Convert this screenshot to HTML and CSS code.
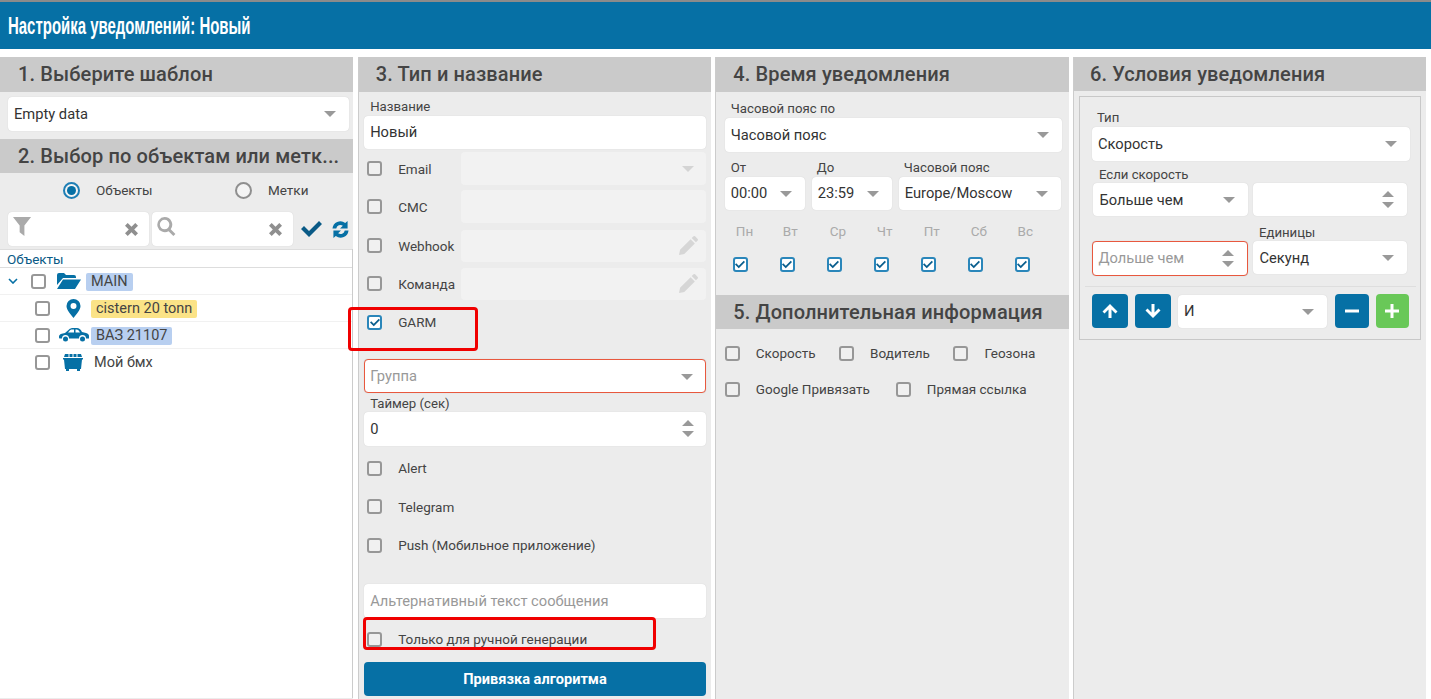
FILE: index.html
```html
<!DOCTYPE html>
<html lang="ru">
<head>
<meta charset="utf-8">
<title>Настройка уведомлений</title>
<link rel="stylesheet" href="styles.css">
</head>
<body>
<svg class="defs" width="0" height="0" aria-hidden="true">
  <defs>
    <symbol id="caret" viewBox="0 0 12 6"><path d="M0 0h12L6 6z"/></symbol>
    <symbol id="spin" viewBox="0 0 12 18"><path d="M6 0l6 6H0zM0 11h12l-6 6z"/></symbol>
    <symbol id="pencil" viewBox="0 0 18 18"><path d="M0 18l1-5L11 3l4 4L5 17zM12 2l1.500-1.500a1.400 1.400 0 0 1 2 0l2 2a1.400 1.400 0 0 1 0 2L16 6z"/></symbol>
    <symbol id="x" viewBox="0 0 12 12"><path d="M2.500 0L6 3.500 9.500 0 12 2.500 8.500 6 12 9.500 9.500 12 6 8.500 2.500 12 0 9.500 3.500 6 0 2.500z"/></symbol>
    <symbol id="tick" viewBox="0 0 12 10"><path d="M1.500 3.500L4.500 6.500 10.500.5 12 2 4.500 9.500 0 5z"/></symbol>
  </defs>
</svg>

<header class="title-bar"><h1 class="title">Настройка уведомлений: Новый</h1></header>

<main class="columns">
  <section class="col">
    <h2 class="head">1. Выберите шаблон</h2>
    <div class="tpl-wrap">
      <div class="field select">Empty data<svg class="caret"><use href="#caret"/></svg></div>
    </div>
    <h2 class="head head-2">2. Выбор по объектам или метк...</h2>
    <div class="radios">
      <label class="radio"><span class="dot on"></span>Объекты</label>
      <label class="radio"><span class="dot"></span>Метки</label>
    </div>
    <div class="filters">
      <div class="field filter">
        <svg class="f-ico" viewBox="0 0 20 20"><path d="M0 0h19L12 9v11l-5-4V9z"/></svg>
        <svg class="clear"><use href="#x"/></svg>
      </div>
      <div class="field filter">
        <svg class="f-ico" viewBox="0 0 20 20"><path fill-rule="evenodd" d="M8 0a8 8 0 0 1 6.400 12.800l5 5-2.200 2.200-5-5A8 8 0 1 1 8 0zm0 3a5 5 0 1 0 0 10A5 5 0 0 0 8 3z"/></svg>
        <svg class="clear"><use href="#x"/></svg>
      </div>
      <svg class="tool-check" viewBox="0 0 21 16"><path d="M0 8l3-3 5 5L18 0l3 3L8 16z"/></svg>
      <svg class="tool-sync" viewBox="0 0 18 18"><path d="M.5 8A8.500 8.500 0 0 1 14 2L16.500 0v8h-8L11.500 5A4.500 4.500 0 0 0 4.500 8zM17.500 10A8.500 8.500 0 0 1 4 16L1.500 18v-8h8L6.500 13A4.500 4.500 0 0 0 13.500 10z"/></svg>
    </div>
    <div class="tree">
      <div class="tree-title">Объекты</div>
      <div class="tree-row">
        <svg class="chev" viewBox="0 0 10 6"><path d="M1 1l4 4 4-4" fill="none" stroke="#0670a5" stroke-width="1.600"/></svg>
        <span class="check root-check"></span>
        <svg class="t-ico folder" viewBox="0 0 24 16"><path d="M0 2a2 2 0 0 1 2-2h5l2 2h8a2 2 0 0 1 2 2v1H6L0 12zM6 6.500h18L18 16H0z"/></svg>
        <span class="tag blue">MAIN</span>
      </div>
      <div class="tree-row sub">
        <span class="check"></span>
        <svg class="t-ico pin" viewBox="0 0 14 19"><path fill-rule="evenodd" d="M7 0a7 7 0 0 1 7 7c0 4-4 8-7 12-3-4-7-8-7-12a7 7 0 0 1 7-7zm0 4a3 3 0 1 0 0 6 3 3 0 0 0 0-6z"/></svg>
        <span class="tag yellow">cistern 20 tonn</span>
      </div>
      <div class="tree-row sub">
        <span class="check"></span>
        <svg class="t-ico car" viewBox="0 0 30 14"><path fill-rule="evenodd" d="M0 8.500c0-2 3-3.200 6-3.500L10 1.500C11 .5 12.500 0 14 0h4c2 0 3.500 1 5 4l4 1c2 .5 3 1.500 3 3v2.500h-3a3.500 3.500 0 0 0-7 0H10a3.500 3.500 0 0 0-7 0H1c-.7 0-1-.5-1-1zM9 4.500h6V1.500h-2c-1 0-1.500.3-2 .8zM16.500 1.500v3H21c-1-2-2-3-3.500-3z"/><circle cx="6.500" cy="11" r="2.500"/><circle cx="23.500" cy="11" r="2.500"/></svg>
        <span class="tag blue">ВАЗ 21107</span>
      </div>
      <div class="tree-row sub last">
        <span class="check"></span>
        <svg class="t-ico bin" viewBox="0 0 20 17"><path d="M1 3l1-3h16l1 3zM0 4h20v1.500h-1l-1 9.500h-1v2h-3v-2H6v2H3v-2H2L1 5.500H0z"/><path d="M6 0v3M10 0v3M14 0v3" stroke="#fff" stroke-width="1"/></svg>
        <span class="plain">Мой бмх</span>
      </div>
    </div>
  </section>

  <section class="col">
    <h2 class="head">3. Тип и название</h2>
    <div class="body-3">
      <label class="lbl name-lbl">Название</label>
      <div class="field name-field">Новый</div>
      <div class="opt opt-first"><span class="check"></span><span class="opt-text">Email</span><div class="field off"><svg class="caret light"><use href="#caret"/></svg></div></div>
      <div class="opt opt-gap5"><span class="check"></span><span class="opt-text">СМС</span><div class="field off"></div></div>
      <div class="opt opt-gap6"><span class="check"></span><span class="opt-text">Webhook</span><div class="field off short"><svg class="pen"><use href="#pencil"/></svg></div></div>
      <div class="opt opt-gap5"><span class="check"></span><span class="opt-text">Команда</span><div class="field off short"><svg class="pen"><use href="#pencil"/></svg></div></div>
      <div class="opt-line garm"><span class="check on"><svg class="tick"><use href="#tick"/></svg></span><span class="opt-text">GARM</span></div>
      <div class="field select bad muted">Группа<svg class="caret"><use href="#caret"/></svg></div>
      <label class="lbl timer-lbl">Таймер (сек)</label>
      <div class="field select">0<svg class="spin"><use href="#spin"/></svg></div>
      <div class="opt-line alert"><span class="check"></span><span class="opt-text">Alert</span></div>
      <div class="opt-line tg"><span class="check"></span><span class="opt-text">Telegram</span></div>
      <div class="opt-line tg"><span class="check"></span><span class="opt-text">Push (Мобильное приложение)</span></div>
      <div class="field muted alt">Альтернативный текст сообщения</div>
      <div class="opt-line manual"><span class="check"></span><span class="opt-text">Только для ручной генерации</span></div>
      <button class="bind" type="button">Привязка алгоритма</button>
    </div>
  </section>

  <section class="col">
    <h2 class="head">4. Время уведомления</h2>
    <div class="body-4">
      <label class="lbl tz-lbl">Часовой пояс по</label>
      <div class="field select">Часовой пояс<svg class="caret"><use href="#caret"/></svg></div>
      <div class="time-grid">
        <div class="cell"><label class="lbl">От</label><div class="field select">00:00<svg class="caret"><use href="#caret"/></svg></div></div>
        <div class="cell"><label class="lbl">До</label><div class="field select">23:59<svg class="caret"><use href="#caret"/></svg></div></div>
        <div class="cell"><label class="lbl">Часовой пояс</label><div class="field select">Europe/Moscow<svg class="caret"><use href="#caret"/></svg></div></div>
      </div>
      <div class="days">
        <div class="day"><span>Пн</span><span class="check on"><svg class="tick"><use href="#tick"/></svg></span></div>
        <div class="day"><span>Вт</span><span class="check on"><svg class="tick"><use href="#tick"/></svg></span></div>
        <div class="day"><span>Ср</span><span class="check on"><svg class="tick"><use href="#tick"/></svg></span></div>
        <div class="day"><span>Чт</span><span class="check on"><svg class="tick"><use href="#tick"/></svg></span></div>
        <div class="day"><span>Пт</span><span class="check on"><svg class="tick"><use href="#tick"/></svg></span></div>
        <div class="day"><span>Сб</span><span class="check on"><svg class="tick"><use href="#tick"/></svg></span></div>
        <div class="day"><span>Вс</span><span class="check on"><svg class="tick"><use href="#tick"/></svg></span></div>
      </div>
    </div>
    <h2 class="head head-5">5. Дополнительная информация</h2>
    <div class="extras">
      <div class="extra-row">
        <span class="extra"><span class="check"></span>Скорость</span>
        <span class="extra"><span class="check"></span>Водитель</span>
        <span class="extra"><span class="check"></span>Геозона</span>
      </div>
      <div class="extra-row">
        <span class="extra e4"><span class="check"></span>Google Привязать</span>
        <span class="extra"><span class="check"></span>Прямая ссылка</span>
      </div>
    </div>
  </section>

  <section class="col">
    <h2 class="head head-6">6. Условия уведомления</h2>
    <div class="cond">
      <label class="lbl type-lbl">Тип</label>
      <div class="field select">Скорость<svg class="caret"><use href="#caret"/></svg></div>
      <label class="lbl speed-lbl">Если скорость</label>
      <div class="pair">
        <div class="field select">Больше чем<svg class="caret"><use href="#caret"/></svg></div>
        <div class="field select"><svg class="spin"><use href="#spin"/></svg></div>
      </div>
      <label class="lbl unit-lbl">Единицы</label>
      <div class="pair">
        <div class="field select bad muted">Дольше чем<svg class="spin"><use href="#spin"/></svg></div>
        <div class="field select">Секунд<svg class="caret"><use href="#caret"/></svg></div>
      </div>
      <div class="actions">
        <button class="btn" type="button"><svg viewBox="0 0 16 16"><path d="M8 1L15.500 8.500 13.500 10.500 9.500 6.500V15h-3V6.500L2.500 10.500.5 8.500z"/></svg></button>
        <button class="btn" type="button"><svg viewBox="0 0 16 16"><path d="M8 15L.5 7.500 2.500 5.500 6.500 9.500V1h3v8.500L13.500 5.500 15.500 7.500z"/></svg></button>
        <div class="field select and">И<svg class="caret"><use href="#caret"/></svg></div>
        <button class="btn minus" type="button"><svg viewBox="0 0 16 16"><path d="M1 6.500h14v3H1z"/></svg></button>
        <button class="btn green" type="button"><svg viewBox="0 0 16 16"><path d="M6.500 1h3v5.500H15v3H9.500V15h-3V9.500H1v-3h5.500z"/></svg></button>
      </div>
    </div>
  </section>
</main>

<div class="mark mark-garm"></div>
<div class="mark mark-manual"></div>
</body>
</html>
```

FILE: styles.css
```css
* { box-sizing: border-box; }
html, body { height: 100%; }
body {
  margin: 0;
  height: 699px;
  overflow: hidden;
  background: #fff;
  border-top: 2px solid #8b8b8b;
  font-family: Roboto, "Liberation Sans", sans-serif;
  font-size: 14px;
  color: #333;
  position: relative;
}
.defs { position: absolute; }
.title-bar { height: 47px; background: #0670a5; padding: 2px 8px 0; display: flex; align-items: center; }
.title {
  margin: 0;
  font-family: "Liberation Sans", sans-serif;
  font-size: 23px;
  font-weight: 700;
  color: #fff;
  transform: scaleX(.65);
  transform-origin: left center;
  white-space: nowrap;
}
.columns {
  display: grid;
  grid-template-columns: repeat(4, 353.25px);
  column-gap: 4.4px;
  margin-top: 8px;
  height: 642px;
}
.col { background: #ececec; border-left: 1px solid #ccc; min-width: 0; }
.col:first-child { border-left: 0; }
.head {
  margin: 0;
  height: 35px;
  background: #cacaca;
  color: #444;
  font-size: 20px;
  font-weight: 500;
  line-height: 35px;
  letter-spacing: .12px;
  padding-left: 18px;
  white-space: nowrap;
}
.head-2 { height: 34px; line-height: 34px; }
.col:nth-child(2) .head { padding-left: 17px; }
.col:nth-child(3) .head { padding-left: 17px; }
.col:nth-child(4) .head { padding-left: 16px; }
.col .head-6 { height: 34px; line-height: 34px; }

.field {
  position: relative;
  height: 34px;
  background: #fff;
  border-radius: 4px;
  box-shadow: 0 0 1px rgba(0,0,0,.18);
  padding: 0 6px;
  font-size: 14.7px;
  line-height: 34px;
  color: #333;
  white-space: nowrap;
}
.name-field { height: 33px; line-height: 32px; }
.select { padding-right: 24px; }
.bad { border: 1px solid #e8583e; line-height: 32px; padding-left: 5px; }
.muted { color: #999; }
.off { background: #f2f2f2; flex: 1; height: 33px; box-shadow: none; }
.short { height: 32px; }
.caret { position: absolute; right: 13px; top: 14px; width: 12px; height: 6px; fill: #999; }
.caret.light { fill: #d4d4d4; }
.spin { position: absolute; right: 13px; top: 8px; width: 12px; height: 18px; fill: #999; }
.body-3 .caret, .body-3 .spin { right: 12px; }
.pen { position: absolute; right: 8px; top: 6px; width: 19px; height: 19px; fill: #d6d6d6; }

.check {
  display: inline-block;
  flex: none;
  width: 15px;
  height: 15px;
  border: 2px solid #979797;
  border-radius: 3px;
  background: #f0f0f0;
  position: relative;
}
.check.on { border-color: #2a86ba; background: #fff; }
.tick { position: absolute; left: .5px; top: 1px; width: 10px; height: 9px; fill: #0a5f8e; }

.tpl-wrap { padding: 5px 4px 8px 8px; }
.radios { display: flex; height: 39px; align-items: center; padding: 0 0 5px 63px; }
.radio { flex: none; display: flex; align-items: center; font-size: 13.5px; color: #444; width: 172px; }
.dot { width: 17px; height: 17px; border-radius: 50%; border: 2px solid #8f8f8f; margin-right: 16px; background: #f4f4f4; position: relative; }
.dot.on { border-color: #1f7fb5; }
.dot.on::after { content: ""; position: absolute; inset: 2px; border-radius: 50%; background: #0670a5; }
.filters { display: flex; align-items: center; padding-left: 8px; height: 34px; }
.filter { width: 141px; margin-right: 3px; }
.f-ico { position: absolute; left: 5px; top: 5px; width: 19px; height: 19px; fill: #aaa; }
.clear { position: absolute; right: 11px; top: 11px; width: 13px; height: 13px; fill: #8f8f8f; }
.tool-check { flex: none; width: 21px; height: 16px; fill: #0a5a86; margin-left: 5px; }
.tool-sync { flex: none; width: 17px; height: 17px; fill: #0670a5; margin-left: 10px; }
.tree { margin-top: 3px; background: #fff; height: 449px; border-right: 1px solid #ccc; }
.tree-title { height: 19px; padding-left: 7px; font-size: 13.5px; line-height: 19px; color: #0a5a86; border-top: 1px solid #ddd; border-bottom: 1px solid #ddd; }
.tree-row { height: 27px; display: flex; align-items: center; position: relative; border-bottom: 1px solid #f1f1f1; padding-left: 8px; font-size: 14.5px; }
.sub { padding-left: 35px; }
.last { border-bottom: 0; }
.chev { width: 10px; height: 6px; margin-right: 13px; }
.sub .check, .root-check { background: #fff; }
.t-ico { fill: #0670a5; flex: none; }
.folder { width: 24px; height: 16px; margin: 0 5px 0 11px; }
.pin { width: 15px; height: 19px; margin: 0 10px 0 16px; }
.car { width: 30px; height: 14px; margin: 0 2px 0 9px; }
.bin { width: 20px; height: 17px; margin: 0 11px 0 13px; }
.tag { padding: 0 5px; margin-top: 1px; border-radius: 2px; line-height: 18px; color: #444; }
.blue { background: #b8cff0; }
.yellow { background: #fbe387; }
.plain { color: #444; }

.body-3 { padding: 0 5px 0 5.5px; }
.lbl { display: block; font-size: 13.2px; color: #444; line-height: 15px; }
.name-lbl { padding: 7px 0 2px 6px; line-height: 15px; height: 24px; }
.opt { display: flex; align-items: center; height: 33px; padding-left: 3px; }
.opt-first { margin-top: 3px; }
.opt-gap5 { margin-top: 5px; }
.opt-gap6 { margin-top: 6px; }
.opt-text { width: 62.5px; margin-left: 16px; font-size: 13.5px; color: #444; flex: none; white-space: nowrap; }
.opt-line { display: flex; align-items: center; height: 16px; padding-left: 3px; }
.opt-line .opt-text { width: auto; }
.garm { margin-top: 14px; margin-bottom: 29px; }
.timer-lbl { padding: 3px 0 0 6px; height: 19px; }
.alert { margin-top: 14px; }
.tg { margin-top: 22.5px; }
.alt { margin-top: 31px; }
.manual { margin-top: 13px; }
.bind {
  display: block;
  width: 100%;
  height: 34px;
  margin-top: 15px;
  border: 0;
  border-radius: 4px;
  background: #0670a5;
  color: #fff;
  font: 700 14.6px Roboto, sans-serif;
}

.body-4 { padding: 0 7px 0 8.5px; height: 203px; }
.tz-lbl { padding-top: 9px; height: 26px; padding-left: 6px; }
.time-grid { display: grid; grid-template-columns: 80px 80px 162px; column-gap: 7px; margin-top: 6px; }
.cell .lbl { padding-left: 6px; height: 19px; line-height: 20px; }
.cell:nth-child(2) .lbl, .cell:last-child .lbl { padding-left: 5px; }
.cell .field { height: 33px; line-height: 33px; }
.days { display: flex; margin-top: 14px; padding-left: 8px; }
.day { width: 47.3px; display: flex; flex-direction: column; gap: 18px; align-items: flex-start; font-size: 13.5px; color: #aaa; height: 50px; }
.day span:first-child { padding-left: 3px; line-height: 15px; }
.col .head-5 { height: 34px; line-height: 34px; padding-left: 17px; }
.extras { padding: 16px 0 0 8.5px; }
.extra-row { display: flex; height: 16px; margin-bottom: 20px; }
.extra { display: flex; align-items: center; font-size: 13.5px; color: #444; gap: 16px; margin-right: 23.5px; white-space: nowrap; }
.e4 { margin-right: 26px; }

.cond { margin: 5px 5px 0 5px; border: 1px solid #c8c8c8; height: 244px; padding: 0 10px 0 12px; }
.type-lbl { padding: 13px 0 0 5px; height: 30px; }
.speed-lbl { padding: 6px 0 0 7px; height: 22px; }
.pair { display: grid; grid-template-columns: 155px 154px; column-gap: 5px; padding-left: 1.5px; align-items: start; }
.unit-lbl { padding: 9px 0 0 167px; height: 25px; }
.pair .field { height: 33px; line-height: 34px; }
.pair .bad { height: 35px; margin-left: -1px; line-height: 33px; }
.actions { display: flex; align-items: center; margin: 10px -6px 0 -7px; padding: 7px 6px 0 7px; border-top: 1px solid #dedede; }
.btn { width: 36px; height: 34px; border: 0; border-radius: 4px; background: #0670a5; padding: 0; margin-right: 7px; display: flex; align-items: center; justify-content: center; flex: none; }
.btn svg { width: 16px; height: 16px; fill: #fff; }
.and { width: 149px; margin-right: 8px; height: 33px; line-height: 32px; flex: none; }
.minus { width: 34px; }
.btn.green { background: #69c858; width: 33px; margin-right: 0; }
.mark { position: absolute; border: 3px solid #f00000; border-radius: 4px; pointer-events: none; }
.mark-garm { left: 348px; top: 305px; width: 130px; height: 44px; }
.mark-manual { left: 363px; top: 615px; width: 293px; height: 33px; }
```
